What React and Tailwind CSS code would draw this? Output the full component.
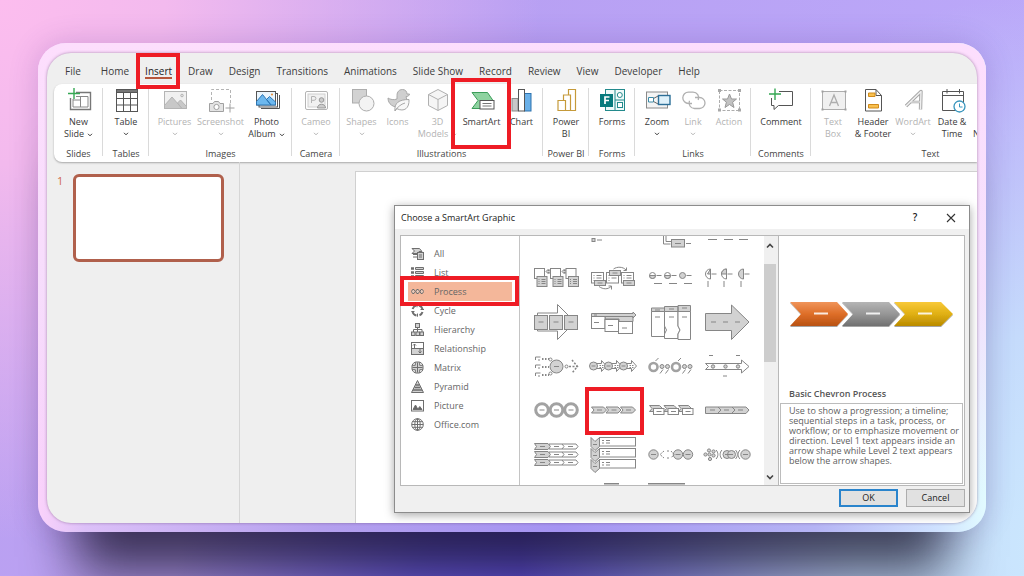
import React from "react";

const TABS = ["File", "Home", "Insert", "Draw", "Design", "Transitions", "Animations", "Slide Show", "Record", "Review", "View", "Developer", "Help"];

function Caret({ className = "" }) {
  return (
    <svg className={"inline-block " + className} width="6" height="4" viewBox="0 0 6 4" fill="none" stroke="currentColor" aria-hidden="true">
      <path d="M1 .8 3 2.8 5 .8" />
    </svg>
  );
}

function Highlight({ className }) {
  return <span aria-hidden="true" className={"pointer-events-none absolute z-10 border-4 border-[#ee1c25] " + className} />;
}

const G = "#b4b4b4";
const L = "#e4e4e4";
const D = "#5c5c5c";

const ICONS = {
  newSlide: (
    <g fill="none" stroke={D}>
      <path d="M11 4.500H25.500V21.500H5.500V10" stroke="#777" strokeWidth="1.400" />
      <path d="M11 8.500H23V19H8V11M15.500 8.500V19M8 12H15" stroke="#888" />
      <path d="M9 0V11M3 5.500H15" stroke="#35a853" strokeWidth="1.400" />
    </g>
  ),
  table: (
    <g fill="none" stroke="#555">
      <rect x="4.500" y="1.500" width="21" height="22" fill="#fff" />
      <rect x="4.500" y="1.500" width="21" height="3" fill="#777" />
      <path d="M4.500 10.500H25.500M4.500 17H25.500M11.500 4V23M18.500 4V23" />
    </g>
  ),
  pictures: (
    <g fill={L} stroke={G}>
      <rect x="3.500" y="3.500" width="22" height="17" fill="#f0f0f0" />
      <path d="M3.500 17.500 11 9 21 20.500H3.500ZM16.500 15 19.500 12 25.500 18.500V20.500H21Z" fill="#c8c8c8" />
      <circle cx="21" cy="7.500" r="1.300" />
    </g>
  ),
  screenshot: (
    <g fill="none" stroke={G}>
      <path d="M4.500 12V1.500H23.500V15" strokeDasharray="3 2" />
      <path d="M2.500 15.500H6L7.500 13.500H11.500L13 15.500H16.500V23.500H2.500Z" fill={L} stroke="#a0a0a0" />
      <circle cx="9.500" cy="19" r="2.600" fill="#fff" stroke="#a0a0a0" />
      <path d="M23 15.500V24.500M18.500 20H27.500" stroke="#a0a0a0" />
    </g>
  ),
  photo: (
    <g fill="#fff" stroke="#555">
      <path d="M8 20.500H26.500V7" fill="none" />
      <rect x="6" y="5.500" width="18.500" height="13.500" />
      <rect x="3.500" y="3.500" width="19" height="13.500" fill="#eaf5fd" />
      <path d="M3.500 13.500 9.500 6.500 18 17H3.500ZM13.500 11.500 16.500 8.500 22.500 14V17H18Z" fill="#6db8ee" stroke="#2c76b5" />
      <circle cx="19" cy="6.500" r="1.100" fill="#e8903d" stroke="none" />
    </g>
  ),
  cameo: (
    <g fill="none" stroke={G}>
      <rect x="3.500" y="3.500" width="22" height="18" rx="1.500" />
      <rect x="6" y="6" width="17" height="13" fill="#f1f1f1" stroke="#d0d0d0" />
      <path d="M9.500 15V8.500H12a1.900 1.900 0 0 1 0 3.800H9.500" />
      <circle cx="19.500" cy="12" r="2.300" fill="#ccc" stroke="#999" />
      <path d="M15.500 20c0-5 8-5 8 0Z" fill="#ccc" stroke="#999" />
    </g>
  ),
  shapes: (
    <g stroke="#adadad">
      <rect x="4.500" y="1.500" width="14" height="13.500" fill="#d2d2d2" />
      <circle cx="18.500" cy="15.500" r="7.500" fill="#f3f3f3" />
    </g>
  ),
  icons: (
    <g stroke="#a8a8a8" fill="#cfcfcf">
      <path d="M13 7.500C13 4 15 1.500 18.500 1.500c2.800 0 4.500 2 4.500 4.500h2.500c0 1.500-1.500 2.500-3.500 2.700l1 3.300c0 3-3 6.500-7 7-7 .8-12-3-12-9 2 1.500 6 2.300 9 1Z" />
      <path d="M11 23C10 15 15 11.500 25 11.500 25.500 20 20.500 24.500 12.500 20.500ZM11 23C13 19.500 17 16 21 15" fill="#f7f7f7" />
    </g>
  ),
  cube: (
    <g fill="#f5f5f5" stroke="#b0b0b0" strokeLinejoin="round">
      <path d="M14 1.500 23.500 6.500V17.500L14 22.500 4.500 17.500V6.500Z" />
      <path d="M4.500 6.500 14 11.500 23.500 6.500M14 11.500V22.500" fill="none" />
    </g>
  ),
  smartart: (
    <g>
      <path d="M4 4.500H19.500L25 12.500 19.500 20.500H4L10 12.500Z" fill="#8ed3a0" stroke="#3c9d5a" />
      <rect x="12" y="12.500" width="14" height="8.500" fill="#fff" stroke="#555" />
      <path d="M14.500 15.500H23.500M14.500 18H23.500" stroke="#777" />
    </g>
  ),
  chart: (
    <g stroke="#555">
      <rect x="4" y="10.500" width="6" height="12.500" fill="#c8c8c8" stroke="#8a8a8a" />
      <rect x="16.500" y="5.500" width="6.500" height="17.500" fill="#6ab0e8" stroke="#2d72ae" />
      <rect x="10.500" y="1.500" width="6" height="21.500" fill="#fff" />
    </g>
  ),
  powerbi: (
    <g stroke="#c59a3a" fill="#fff" strokeWidth="1.200">
      <path d="M16.500 1.500H23.500V22.500H16.500Z" />
      <path d="M11.500 7H18.500V22.500H11.500Z" />
      <path d="M6 12.500H13.500V22.500H6Z" />
    </g>
  ),
  forms: (
    <g>
      <rect x="7.500" y="1.500" width="19" height="21" fill="#eef9f9" stroke="#238a8c" />
      <path d="M17 1.500V22.500M17 12H26.500" stroke="#238a8c" />
      <circle cx="21.800" cy="7" r="2.500" fill="#fff" stroke="#238a8c" />
      <rect x="19.500" y="14.500" width="5" height="5" fill="#fff" stroke="#238a8c" />
      <rect x="2" y="6" width="13" height="13" fill="#077a7d" />
      <path d="M7 16V9H11.500M7 12.500H11" fill="none" stroke="#fff" strokeWidth="1.700" />
    </g>
  ),
  zoom: (
    <g stroke="#666" fill="#f4f4f4">
      <rect x="3.500" y="4" width="21" height="16" stroke="#8a8a8a" />
      <path d="M5.500 9.500H10.500V14H5.500Z" fill="#fff" stroke="#3b8aa8" />
      <path d="M10.500 10.500 16 7.500M10.500 13.500 16 16.500" fill="none" />
      <rect x="15.500" y="7.500" width="11.500" height="9" fill="#dff1fa" stroke="#2c6f98" strokeWidth="1.400" />
    </g>
  ),
  link: (
    <g fill="none" stroke="#b0b0b0" strokeWidth="1.300">
      <path d="M13 15.500H9.500a5.700 5.700 0 0 1 0-11.400H14a5.700 5.700 0 0 1 5.200 8" />
      <path d="M16 9.500H20.500a5.500 5.500 0 0 1 0 11H15.500a5.500 5.500 0 0 1-5-7.700" />
    </g>
  ),
  action: (
    <g fill="none" stroke="#adadad">
      <rect x="4.500" y="2.500" width="20" height="20" strokeDasharray="3 1.500" />
      <path d="M14.500 6 16.500 11H21.500L17.600 14.200 19 19.500 14.500 16.500 10 19.500 11.400 14.200 7.500 11H12.500Z" fill="#c2c2c2" stroke="#999" />
      <g fill="#a8a8a8" stroke="none"><rect x="3" y="1" width="3" height="3" /><rect x="23" y="1" width="3" height="3" /><rect x="3" y="20.500" width="3" height="3" /><rect x="23" y="20.500" width="3" height="3" /></g>
    </g>
  ),
  comment: (
    <g fill="none">
      <path d="M12 3.500H25.500V17.500H11.500L7 21.500V17.500H4.500V10" stroke="#555" />
      <path d="M8 .5V12M2 6H14" stroke="#35a853" strokeWidth="1.400" />
    </g>
  ),
  textbox: (
    <g fill="#f0f0f0" stroke="#adadad">
      <rect x="3.500" y="3.500" width="23" height="18" />
      <path d="M10.500 18 15 7 19.500 18M12 14.500H18" fill="none" strokeWidth="1.300" />
      <g fill="#a0a0a0" stroke="none"><rect x="2.500" y="2.500" width="2" height="2" /><rect x="25.500" y="2.500" width="2" height="2" /><rect x="2.500" y="20.500" width="2" height="2" /><rect x="25.500" y="20.500" width="2" height="2" /></g>
    </g>
  ),
  header: (
    <g stroke="#555" fill="#fff">
      <path d="M6.500 1.500H17L22.500 7.500V23H6.500Z" />
      <path d="M17 1.500V7.500H22.500" fill="none" />
      <path d="M9.500 5H16V8.500H9.500ZM9.500 16.500H19.500V20H9.500Z" fill="#f8c04e" stroke="#d08b1c" />
    </g>
  ),
  wordart: (
    <g fill="none" stroke="#a8a8a8" strokeLinejoin="round">
      <path d="M7 18 22 3.500 21.500 21.500" strokeWidth="3.400" />
      <path d="M11.500 14H21" strokeWidth="2.600" />
      <path d="M7 18 22 3.500 21.500 21.500" stroke="#f0f0f0" strokeWidth="1.400" />
      <path d="M12 14H21" stroke="#f0f0f0" strokeWidth="1" />
    </g>
  ),
  date: (
    <g stroke="#555" fill="#fff">
      <path d="M4.500 3.500H25.500V22.500H4.500Z" />
      <path d="M4.500 7.500H25.500M9 1V5.500M21.500 1V5.500" />
      <circle cx="21.500" cy="18.500" r="5.500" stroke="#3795bd" strokeWidth="1.300" />
      <path d="M21.500 15.500V19H24.500" fill="none" stroke="#3795bd" />
    </g>
  ),
};

function Tool({ icon, lines, caret, w, off, marked }) {
  const last = lines.length - 1;
  return (
    <button type="button" className={"relative flex h-[54px] shrink-0 flex-col items-center text-[9px] leading-[12px] whitespace-nowrap " + w + (off ? " text-[#b3b3b3]" : " text-[#3a3a3a]")}>
      <svg width="28" height="24" viewBox="0 0 28 24" className="mb-1 shrink-0 overflow-visible" aria-hidden="true">{ICONS[icon]}</svg>
      {lines.map((t, i) => (
        <span key={t} className="block">
          {t}
          {caret === "side" && i === last && <Caret className="ml-[3px] align-middle" />}
        </span>
      ))}
      {caret === "below" && <span className="flex h-3 items-center justify-center"><Caret /></span>}
      {marked && <Highlight className="-top-[10px] -right-[7px] h-[71px] w-[60px]" />}
    </button>
  );
}

const GROUPS = [
  { name: "Slides", w: "w-[49px]", tools: [{ icon: "newSlide", lines: ["New", "Slide"], caret: "side", w: "w-[46px]" }] },
  { name: "Tables", w: "w-[46px]", tools: [{ icon: "table", lines: ["Table"], caret: "below", w: "w-[44px]" }] },
  { name: "Images", w: "w-[143px]", tools: [
    { icon: "pictures", lines: ["Pictures"], caret: "below", w: "w-[46px]", off: true },
    { icon: "screenshot", lines: ["Screenshot"], caret: "below", w: "w-[46px]", off: true },
    { icon: "photo", lines: ["Photo", "Album"], caret: "side", w: "w-[46px]" } ] },
  { name: "Camera", w: "w-[48px]", tools: [{ icon: "cameo", lines: ["Cameo"], caret: "below", w: "w-[46px]", off: true }] },
  { name: "Illustrations", w: "w-[203px]", tools: [
    { icon: "shapes", lines: ["Shapes"], caret: "below", w: "w-[36px]", off: true },
    { icon: "icons", lines: ["Icons"], w: "w-[36px]", off: true },
    { icon: "cube", lines: ["3D", "Models"], caret: "side", w: "w-[44px]", off: true },
    { icon: "smartart", lines: ["SmartArt"], w: "w-[44px]", marked: true },
    { icon: "chart", lines: ["Chart"], w: "w-[36px]" } ] },
  { name: "Power BI", w: "w-[46px]", tools: [{ icon: "powerbi", lines: ["Power", "BI"], w: "w-[36px]" }] },
  { name: "Forms", w: "w-[46px]", tools: [{ icon: "forms", lines: ["Forms"], w: "w-[36px]" }] },
  { name: "Links", w: "w-[116px]", tools: [
    { icon: "zoom", lines: ["Zoom"], caret: "below", w: "w-[36px]" },
    { icon: "link", lines: ["Link"], caret: "below", w: "w-[36px]", off: true },
    { icon: "action", lines: ["Action"], w: "w-[36px]", off: true } ] },
  { name: "Comments", w: "w-[60px]", tools: [{ icon: "comment", lines: ["Comment"], w: "w-[46px]" }] },
  { name: "Text", w: "w-[239px]", wide: true, tools: [
    { icon: "textbox", lines: ["Text", "Box"], w: "w-[36px]", off: true },
    { icon: "header", lines: ["Header", "& Footer"], w: "w-[44px]" },
    { icon: "wordart", lines: ["WordArt"], caret: "below", w: "w-[36px]", off: true },
    { icon: "date", lines: ["Date &", "Time"], w: "w-[42px]" } ] },
];

function Ribbon() {
  return (
    <div className="ml-[7px] flex h-[78px] shrink-0 rounded-l-lg bg-white shadow-[0_1px_2px_rgba(0,0,0,0.3)]">
      {GROUPS.map((g) => (
        <section key={g.name} aria-label={g.name} className={"flex shrink-0 flex-col pt-1 " + g.w}>
          <div className={"flex " + (g.wide ? "justify-start pl-1" : "justify-center")}>
            {g.tools.map((t) => <Tool key={t.icon} {...t} />)}
            {g.wide && <button type="button" className="flex h-[54px] items-end pb-[2px] text-[9px] leading-[12px] whitespace-nowrap text-[#3a3a3a]">Number</button>}
          </div>
          <h2 className="mt-[6px] text-center text-[9px] leading-[12px] whitespace-nowrap text-[#444]">{g.name}</h2>
        </section>
      )).flatMap((el, i) => [el, <i key={"d" + i} aria-hidden="true" className="-ml-px mt-1 h-[68px] w-px shrink-0 bg-[#dadada]" />])}
    </div>
  );
}

const K = "#868686";
const F = "#d2d2d2";
const dash = (x, y, w = 5) => <path key={x + "-" + y} d={`M${x} ${y}h${w}`} />;

const THUMBS = [
  ["Accent Process", null],
  ["Alternating Flow", <g key="a"><rect x="3" y="24.500" width="3" height="3" fill={F} /><path d="M8 26h5" /></g>],
  ["Sub-Step Process", <g key="a" fill="none"><path d="M17.500 22v8h7M20 22v5.500h5" /><rect x="25.500" y="25.500" width="13" height="7.500" fill={F} /><path d="M29 29.500h6M40 29.500h5" /></g>],
  ["Phased Process", <path key="a" d="M5 25.500h9M21 25.500h9M36 25.500h9" />],

  ["Picture Accent Process", [2.5, 18.5, 34].map((x) => (
    <g key={x}>
      <rect x={x} y="10.500" width="10" height="10" fill="#fff" />
      <rect x={x + 2.5} y="18.500" width="10" height="10" fill={F} />
      <path d={`M${x + 4} 21.500h1M${x + 7} 21.500h4M${x + 4} 23.500h1M${x + 7} 23.500h4M${x + 4} 25.500h1M${x + 7} 25.500h4`} />
      {x < 30 && <path d={`M${x + 11.5} 13.500l2-2v1h1v-1l2 2-2 2v-1h-1v1z`} fill={F} />}
    </g>
  ))],
  ["Alternating Flow Process", <g key="a">
    {[2.5, 17.5, 32.5].map((x) => <g key={x}><rect x={x} y="14.500" width="12" height="10.500" fill="#fff" /><path d={`M${x + 2} 17.500h1M${x + 5} 17.500h5M${x + 2} 20h1M${x + 5} 20h5M${x + 2} 22.500h1`} /></g>)}
    {[[5.5, 22.5], [20.5, 12.5], [34.5, 22.5]].map(([x, y]) => <g key={x}><rect x={x} y={y} width="11" height="5" fill={F} /><path d={`M${x + 3} ${y + 2.5}h5`} /></g>)}
    <path d="M24.500 11C28 8.500 34 8.500 37 12M37.500 9.500V12.500H34.500M10 28.500C14 31.500 19 31.500 22 28.500M22.500 31.500V28H19.500" fill="none" />
  </g>],
  ["Pie Process", [6.5, 21.5, 36.5].map((x, i) => <g key={x}><circle cx={x} cy="17.500" r="3" fill={i === 2 ? F : "#fff"} />{i < 2 && <path d={`M${x - 3} 17.500a3 3 0 0 0 6 0z`} fill={F} />}<path d={`M${x + 4} 17.500h5M${x + 1.5} 25.500h8`} /></g>)],
  ["Interconnected Pie", [7.5, 23.5, 40.5].map((x, i) => <g key={x}><path d={`M${x} 11v10a5 5 0 0 1 0-10z`} fill={i === 2 ? F : "#fff"} />{i < 2 && <path d={i ? `M${x} 11v5h-5a5 5 0 0 1 5-5z` : `M${x} 11v5h-3z`} fill={F} />}<path d={`M${x + 1} 16h5M${x - 2.5} 23v6`} /></g>)],

  ["Continuous Block Process", <g key="a"><path d="M5.500 11H25.500V2.500L43 20 25.500 37.500V29H5.500Z" fill="#fff" />{[2.5, 17.5, 32.5].map((x) => <g key={x}><rect x={x} y="13.500" width="13" height="14" fill={F} />{dash(x + 4, 20)}</g>)}</g>],
  ["Increasing Arrows Process", <g key="a"><path d="M2.500 11.500H44V10L47 13 44 16V14.500H2.500ZM16 14.500H44V19.500H30V17H16Z" fill={F} /><g fill="#fff"><rect x="2.500" y="14.500" width="13.500" height="12" /><rect x="16" y="17.500" width="13.500" height="12" /><rect x="29.500" y="19.500" width="14" height="12" /></g>{dash(5, 20.5)}{dash(19, 23.5)}{dash(33, 26)}{dash(5, 13, 3)}</g>],
  ["Process List", <g key="a" fill="#fff"><path d="M5.500 9.500H18.500V34.500H5.500Z" /><path d="M18.500 9.500H32V24l2 4-2 4v4.500H18.500V32l2-4-2-4Z" /><path d="M32 9.500H44.500V37.500H32V32l2-4-2-4Z" /><path d="M5.500 6H18.500V9.500H5.500ZM18.500 4.500H32V9.500H18.500ZM32 3.500H44.500V9.500H32Z" fill={F} />{dash(9, 8)}{dash(23, 7)}{dash(36, 6)}{dash(9, 15)}{dash(23, 15)}{dash(36, 15)}</g>],
  ["Continuous Arrow Process", <g key="a"><path d="M2.500 11.500H28.500V3L46 20 28.500 37.500V28.500H2.500Z" fill={F} />{dash(8, 20)}{dash(20, 20)}{dash(32, 20)}</g>],

  ["Converging Radial", <g key="a"><circle cx="24.500" cy="20.500" r="6.500" fill={F} />{dash(22, 20.5)}{[12, 20, 28].map((y) => <g key={y}><path d={`M3.500 ${y + 2}v-3h5M6 ${y + 2}h2`} fill="none" /><path d={`M10 ${y + 1}h7`} strokeDasharray="1.500 1.500" strokeWidth="2" /></g>)}<circle cx="18.500" cy="13.500" r="1.500" fill="#fff" /><circle cx="18.500" cy="27.500" r="1.500" fill="#fff" /><circle cx="34.500" cy="20.500" r="1.500" fill="#fff" /><path d="M37 20.500H46M40 14 45.500 20.500 40 27" fill="none" strokeDasharray="2 1.500" strokeWidth="1.500" /></g>],
  ["Circle Arrow Process", <g key="a">{[4.5, 19.5, 34.5].map((x) => <g key={x}><path d={`M${x} 17.500H${x + 8}V14.500L${x + 13} 20 ${x + 8} 25.500V22.500H${x}Z`} fill="#fff" /><path d={`M${x + 6} 19.500h5M${x + 6} 21.500h4`} strokeDasharray="1.500 1" /><circle cx={x} cy="20" r="4" fill={F} />{dash(x - 2, 20, 4)}</g>)}</g>],
  ["Circle Accent Timeline", <g key="a">{[7.5, 30].map((x) => <g key={x}><circle cx={x} cy="21" r="4" fill="#fff" strokeWidth="2.600" stroke="#a2a2a2" /><path d={`M${x + 2} 15l3-3`} />{[8.5, 14].map((d) => <g key={d}><circle cx={x + d} cy="20.500" r="2" fill={F} /><path d={`M${x + d + 1} 23.500l-3 4`} /></g>)}</g>)}</g>],
  ["Basic Timeline", <g key="a"><path d="M2.500 17.500H38.500V14L46 20.500 38.500 27V23.500H2.500L5.500 20.500Z" fill="#fff" />{[10, 22.5, 35].map((x) => <circle key={x} cx={x} cy="20.500" r="1.700" fill={F} />)}{dash(6, 9.5, 4)}{dash(33, 9.5, 4)}{dash(20, 30, 4)}</g>],

  ["Process Arrows", <g key="a">{[10, 24.5, 39].map((x) => <g key={x}><circle cx={x} cy="20" r="6.300" fill="#fff" stroke="#a2a2a2" strokeWidth="3" />{dash(x - 2.5, 20)}</g>)}</g>],
  ["Basic Chevron Process", <g key="a">{[2.5, 17, 31.5].map((x) => <g key={x}><path d={`M${x} 17H${x + 12}L${x + 15} 20 ${x + 12} 23H${x}L${x + 2.5} 20Z`} fill={F} />{dash(x + 5.5, 20)}</g>)}</g>],
  ["Chevron Accent Process", <g key="a">{[3.5, 18, 32.5].map((x) => <g key={x}><path d={`M${x} 15.500H${x + 10}L${x + 13} 18.500 ${x + 10} 21.500H${x}L${x + 2.5} 18.500Z`} fill={F} /><rect x={x + 4} y="18.500" width="10.500" height="6" fill="#fff" />{dash(x + 7, 21.5)}</g>)}</g>],
  ["Closed Chevron Process", <g key="a"><path d="M2.500 17H43L46 20 43 23.500H2.500Z" fill={F} /><path d="M15 17l3 3-3 3M29 17l3 3-3 3" fill="none" />{dash(7, 20)}{dash(21, 20)}{dash(35, 20)}</g>],

  ["Chevron List", <g key="a">{[12.5, 20.5, 28.5].map((y) => <g key={y}><path d={`M17 ${y - 2.5}H44L46 ${y} 44 ${y + 2.5}H17Z`} fill="#fff" /><path d={`M30 ${y - 2.5}l2 2.500-2 2.500`} fill="none" /><path d={`M2.500 ${y - 3}H16L18.500 ${y} 16 ${y + 3}H2.500L4.500 ${y}Z`} fill={F} />{dash(8, y)}{dash(22, y)}{dash(36, y)}</g>)}</g>],
  ["Vertical Chevron List", <g key="a">{[3.5, 14.5, 25.5].map((y) => <g key={y}><rect x="10.500" y={y} width="36" height="8.500" fill="#fff" /><path d={`M2 ${y}l4 4 4.500-4v9l-4.500 4-4-4z`} fill={F} /><path d={`M13 ${y + 3}h2M17 ${y + 3}h4M13 ${y + 5.5}h2M17 ${y + 5.5}h4`} /><path d={`M4 ${y + 7}h4`} /></g>)}</g>],
  ["Sub-Step Circles", <g key="a">{[7.5, 32, 42].map((x) => <g key={x}><circle cx={x} cy="20.500" r="4.700" fill={F} />{dash(x - 2.5, 20.5)}</g>)}<path d="M18 17 14 20.500 18 24M21 17h2M21 24h2M25 17l3 3.500-3 3.500" fill="none" strokeDasharray="2 1" /></g>],
  ["Random to Result", <g key="a"><g fill={F}>{[[2.5, 20.5], [6, 16.5], [10.5, 17.5], [6.5, 20.5], [10.5, 21.5], [7, 25]].map(([x, y]) => <circle key={x + "," + y} cx={x} cy={y} r="1.600" />)}<circle cx="24" cy="20.500" r="4" /><circle cx="28.500" cy="20.500" r="4" /><circle cx="42.500" cy="20.500" r="4.700" /></g><path d="M13 16c2.500 2.500 2.500 6.500 0 9M19 16c-2.500 2.500-2.500 6.500 0 9M32.500 16c2.500 2.500 2.500 6.500 0 9M37 16c-2.500 2.500-2.500 6.500 0 9M22 20.500h8M40 20.500h5" fill="none" /></g>],

  ["Staggered Process", null],
  ["Descending Process", <path key="a" d="M15 5.500h15M15 7h15" />],
  ["Upward Arrow", <path key="a" d="M2 5.500h37M2 7h37" />],
  ["Circular Bending Process", null],
];

const CATS = [
  ["All", <g key="i"><path d="M1 1.500H8.500L11 4.500H8V6.500H1L3.500 4Z" fill={F} /><path d="M2 7.500h4M2 10h4" /><rect x="6.500" y="5.500" width="6" height="7" fill={F} /><path d="M8 8h3M8 10h3" /></g>],
  ["List", <g key="i"><path d="M0 2.500h3M0 6.500h3M0 10.500h3" strokeWidth="2.500" /><path d="M4.500 1.500h8v2h-8zM4.500 5.500h8v2h-8zM4.500 9.500h8v2h-8z" fill={F} /></g>],
  ["Process", <g key="i" fill="#e8c8b8"><path d="M.5 6.500 1.500 4.500H3L4.300 6.500 3 8.500H1.500ZM4.800 6.500 5.800 4.500H7.300L8.600 6.500 7.300 8.500H5.800ZM9 6.500 10 4.500H11.400L12.700 6.500 11.400 8.500H10Z" /></g>],
  ["Cycle", <g key="i" fill="none"><path d="M8 1.500A5 5 0 0 1 11.500 5M11.500 8A5 5 0 0 1 8.500 11.300M5.500 11.500A5 5 0 0 1 1.600 8M1.600 5A5 5 0 0 1 5 1.600" strokeWidth="2" /><path d="M9.500 5.500h3.500M.3 7.500H3.500M6.500 9.500v3.200M6 .3v3" /></g>],
  ["Hierarchy", <g key="i" fill={F}><rect x="4.500" y=".5" width="4" height="4" /><path d="M6.500 4.500V9M2.500 9V6.500H11V9" fill="none" /><rect x=".5" y="9" width="3.500" height="3.500" /><rect x="5" y="9" width="3.500" height="3.500" /><rect x="9" y="9" width="3.500" height="3.500" /></g>],
  ["Relationship", <g key="i" fill={F}><rect x=".5" y=".5" width="12" height="12" fill="#fff" /><rect x=".5" y="6.500" width="12" height="6" /><path d="M3.500 2V6M2 3.500 3.500 2 5 3.500M9 6V11M7.500 9.500 9 11 10.500 9.500" fill="none" /></g>],
  ["Matrix", <g key="i" fill={F}><path d="M4.300 1H8.700V4.300H12V8.700H8.700V12H4.300V8.700H1V4.300H4.300Z" /><path d="M4 1.200A6 6 0 0 0 1.200 4M9 1.200A6 6 0 0 1 11.800 4M11.800 9A6 6 0 0 1 9 11.800M4 11.800A6 6 0 0 1 1.200 9" fill="none" /><path d="M6.500 1.500V11.500M1.500 6.500H11.500" /></g>],
  ["Pyramid", <g key="i" fill={F}><path d="M6.500 .5 12.500 12.500H.5Z" /><path d="M4.500 5h4M3.500 7.500h6M2 10h9" strokeWidth="1.500" /></g>],
  ["Picture", <g key="i"><rect x=".5" y="1.500" width="12" height="10.500" fill="#fff" /><path d="M2 10.500 4.500 6 7 10.500ZM6.500 10.500 8.800 7.500 11 10.500Z" fill="#666" /></g>],
  ["Office.com", <g key="i" fill="none"><circle cx="6.500" cy="6.500" r="5.800" /><ellipse cx="6.500" cy="6.500" rx="2.700" ry="5.800" /><path d="M6.500 .7V12.300M.7 6.500H12.300M1.500 3.700H11.500M1.500 9.300H11.500" /></g>],
];

function Categories() {
  return (
    <nav aria-label="Categories" className="w-[119px] shrink-0 border-r border-[#c4c4c4] bg-white px-[7px] pt-2">
      {CATS.map(([name, art]) => {
        const on = name === "Process";
        return (
          <button key={name} type="button" aria-pressed={on} className={"relative flex h-[19px] w-full items-center gap-[10px] pl-[3px] text-[9px] text-[#666] " + (on ? "bg-[#f4b79a]" : "")}>
            <svg width="13" height="13" viewBox="0 0 13 13" stroke="#6e6e6e" strokeWidth="1" aria-hidden="true">{art}</svg>
            {name}
            {on && <Highlight className="-top-[6px] -right-[7px] -bottom-[5px] -left-[8px]" />}
          </button>
        );
      })}
    </nav>
  );
}

function Gallery() {
  return (
    <div className="flex min-w-0 flex-1 overflow-hidden bg-white">
      <div className="flex-1 overflow-hidden pl-[7px]">
        <div className="-mt-6 grid grid-cols-[repeat(4,57px)] auto-rows-[44px]">
          {THUMBS.map(([name, art]) => (
            <button key={name} type="button" aria-label={name} className="relative flex items-center justify-center">
              <svg width="48" height="40" viewBox="0 0 48 40" stroke={K} strokeWidth="1" aria-hidden="true">{art}</svg>
              {name === "Basic Chevron Process" && <Highlight className="top-[-1px] right-[-3px] bottom-[-3px] left-px" />}
            </button>
          ))}
        </div>
      </div>
      <div className="flex w-3 shrink-0 flex-col bg-[#f0f0f0]" aria-hidden="true">
        <svg className="mt-1" width="12" height="12" viewBox="0 0 12 12" fill="none" stroke="#444" strokeWidth="1.600"><path d="M3 7.500 6 4.500 9 7.500" /></svg>
        <div className="mt-3 h-[98px] bg-[#cdcdcd]" />
        <svg className="mt-auto mb-[2px]" width="12" height="12" viewBox="0 0 12 12" fill="none" stroke="#444" strokeWidth="1.600"><path d="M3 4.500 6 7.500 9 4.500" /></svg>
      </div>
    </div>
  );
}

function Preview() {
  return (
    <div className="ml-[2px] flex w-[186px] shrink-0 flex-col border-l border-[#b8b8b8] bg-white p-px">
      <svg className="mt-[59px] ml-[9px]" width="168" height="38" viewBox="0 0 168 38" role="img" aria-label="Chevron process preview">
        <defs>
          <linearGradient id="po" x2="0" y2="1"><stop stopColor="#f0945a" /><stop offset=".5" stopColor="#de6e28" /><stop offset="1" stopColor="#b85212" /></linearGradient>
          <linearGradient id="pg" x2="0" y2="1"><stop stopColor="#b5b5b5" /><stop offset=".5" stopColor="#969696" /><stop offset="1" stopColor="#707070" /></linearGradient>
          <linearGradient id="py" x2="0" y2="1"><stop stopColor="#f8c93a" /><stop offset=".5" stopColor="#e0b014" /><stop offset="1" stopColor="#b98a00" /></linearGradient>
          <filter id="ps" x="-10%" y="-20%" width="120%" height="150%"><feDropShadow dx="0" dy="1" stdDeviation=".7" floodOpacity=".35" /></filter>
        </defs>
        <g filter="url(#ps)">
          <path d="M1 6H48L59 18 48 30H1L12 18Z" fill="url(#po)" />
          <path d="M53 6H100L111 18 100 30H53L64 18Z" fill="url(#pg)" />
          <path d="M105 6H152L164 18 152 30H105L116 18Z" fill="url(#py)" />
        </g>
        <path d="M25 17.500h14M77 17.500h14M129 17.500h14" stroke="#fff" strokeOpacity=".85" strokeWidth="2" />
      </svg>
      <h3 className="mt-auto mb-[3px] ml-[9px] text-[9px] leading-[12px] font-semibold text-[#555]">Basic Chevron Process</h3>
      <p className="h-[81px] shrink-0 border border-[#bcbcbc] pt-[2px] pl-[8px] text-[9px] leading-[10px] text-[#606060]">
        Use to show a progression; a timeline; sequential steps in a task, process, or workflow; or to emphasize movement or direction. Level 1 text appears inside an arrow shape while Level 2 text appears below the arrow shapes.
      </p>
    </div>
  );
}

function SmartArtDialog() {
  return (
    <div role="dialog" aria-label="Choose a SmartArt Graphic" className="absolute right-[7px] bottom-[10px] flex h-[308px] w-[576px] flex-col border border-[#8c8c8c] bg-[#f0f0f0] shadow-[0_2px_9px_rgba(0,0,0,0.35)]">
      <header className="flex h-[23px] shrink-0 items-center bg-white pr-[13px] pl-[6px] text-[9px] text-[#222]">
        <h2 className="flex-1">Choose a SmartArt Graphic</h2>
        <button type="button" aria-label="Help" className="w-[10px] text-[10px] font-semibold">?</button>
        <button type="button" aria-label="Close" className="ml-[26px]">
          <svg width="10" height="10" viewBox="0 0 10 10" stroke="#333" strokeWidth="1.100" aria-hidden="true"><path d="M1 1 9 9M9 1 1 9" /></svg>
        </button>
      </header>
      <div className="mt-[6px] mr-[4px] ml-[5px] flex h-[251px] shrink-0 border border-[#b8b8b8]">
        <Categories />
        <Gallery />
        <Preview />
      </div>
      <footer className="mt-[3px] mr-[4px] flex justify-end gap-2 text-[9px] text-[#222]">
        <button type="button" className="h-[18px] w-[59px] border-2 border-[#2a84cc] bg-[#e1e1e1] leading-[12px]">OK</button>
        <button type="button" className="h-[18px] w-[59px] border border-[#adadad] bg-[#e1e1e1] leading-[12px]">Cancel</button>
      </footer>
    </div>
  );
}

export default function App() {
  return (
    <div className="flex h-screen min-h-[576px] flex-col overflow-hidden bg-[radial-gradient(circle_at_0%_0%,#fcbdee_0%,#f3baee_14%,transparent_46%),radial-gradient(circle_at_105%_95%,#cdeaff_0%,#c6dcfd_18%,transparent_46%),radial-gradient(circle_at_55%_115%,#5a48dc_0%,#7160e4_20%,transparent_46%),linear-gradient(100deg,#bca2f3_0%,#b8a0f3_45%,#bba9fa_100%)] px-[38px] pt-[43px] pb-[44px] font-['Open_Sans','Noto_Sans',sans-serif]">
      <div className="flex min-h-0 flex-1 flex-col rounded-[28px] bg-[linear-gradient(90deg,#fbd3fb_0%,#dcc0f8_5%,#b4a0ee_30%,#a594f2_55%,#b5b4f4_82%,#cfe2ff_95%,#e2fbff_100%)] shadow-[0_80px_50px_-37px_rgba(12,8,28,0.7),0_0_30px_rgba(70,30,130,0.2)]">
        <div className="flex min-h-0 flex-1 flex-col rounded-[28px] bg-[linear-gradient(180deg,rgba(253,222,253,1)_0%,rgba(246,222,252,0.9)_50%,rgba(240,220,255,0)_92%)] pt-[10px] pr-[9px] pb-[9px] pl-[9px]">
          <main className="relative flex min-h-0 flex-1 flex-col overflow-hidden rounded-[24px] bg-[#efefef] shadow-[0_0_3px_rgba(80,40,90,0.5)]">
            <div role="tablist" className="flex h-[31px] shrink-0 items-center gap-4 pt-[5px] pl-[18px] text-[10px] leading-[14px] text-[#3c3c3c]">
              {TABS.map((t) => (
                <button key={t} type="button" role="tab" aria-selected={t === "Insert"} className={"relative whitespace-nowrap " + (t === "Insert" ? "font-medium text-[#222]" : t === "File" ? "pr-1" : "")}>
                  {t}
                  {t === "Insert" && <span className="absolute inset-x-0 -bottom-px h-[2px] bg-[#b7563b]" />}
                  {t === "Insert" && <Highlight className="-top-[11px] -right-[8px] -bottom-[11px] -left-[9px]" />}
                </button>
              ))}
            </div>
            <Ribbon />
            <div className="flex min-h-0 flex-1">
              <aside aria-label="Slides" className="flex w-[193px] shrink-0 items-start gap-[10px] border-r border-[#d6d6d6] pt-3 pl-[10px]">
                <span className="text-[11px] leading-[13px] text-[#cf6a4c]">1</span>
                <button type="button" aria-label="Slide 1" className="h-[88px] w-[151px] rounded-[6px] border-[3px] border-[#b0604c] bg-white" />
              </aside>
              <div className="flex min-w-0 flex-1 pt-[9px] pl-[115px]">
                <div className="flex-1 border-t border-l border-[#d0d0d0] bg-white" />
              </div>
            </div>
            <SmartArtDialog />
          </main>
        </div>
      </div>
    </div>
  );
}
